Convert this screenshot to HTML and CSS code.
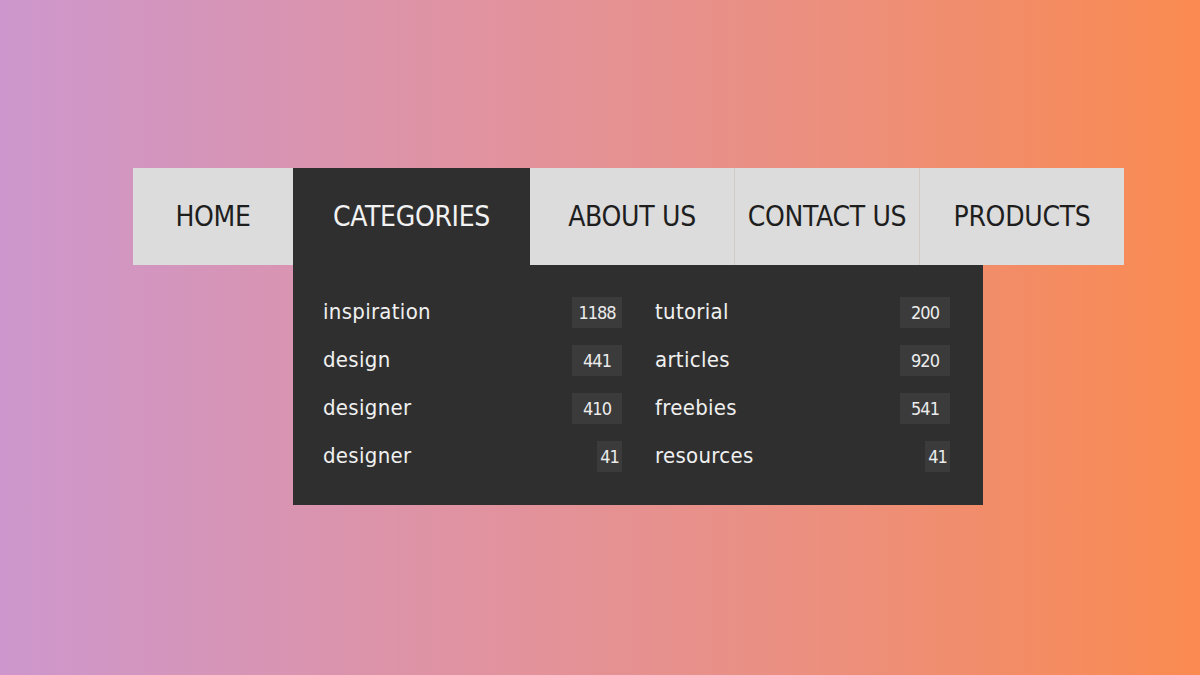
FILE: index.html
```html
<!DOCTYPE html>
<html lang="en">
<head>
<meta charset="utf-8">
<title>Menu</title>
<link rel="stylesheet" href="styles.css">
</head>
<body>
<div class="page">
  <nav class="nav">
    <div class="nav-item nav-home">HOME</div>
    <div class="nav-item nav-categories active">CATEGORIES
      <div class="dropdown">
        <div class="row"><span class="label">inspiration</span><span class="badge">1188</span></div>
        <div class="row"><span class="label">tutorial</span><span class="badge">200</span></div>
        <div class="row"><span class="label">design</span><span class="badge">441</span></div>
        <div class="row"><span class="label">articles</span><span class="badge">920</span></div>
        <div class="row"><span class="label">designer</span><span class="badge">410</span></div>
        <div class="row"><span class="label">freebies</span><span class="badge">541</span></div>
        <div class="row"><span class="label">designer</span><span class="badge badge-narrow">41</span></div>
        <div class="row"><span class="label">resources</span><span class="badge badge-narrow">41</span></div>
      </div>
    </div>
    <div class="nav-item nav-about">ABOUT US</div>
    <div class="nav-item nav-contact">CONTACT US</div>
    <div class="nav-item nav-products">PRODUCTS</div>
  </nav>
</div>
</body>
</html>
```

FILE: styles.css
```css
html, body {
  margin: 0;
  padding: 0;
}
body {
  width: 1200px;
  height: 675px;
  overflow: hidden;
  background: linear-gradient(to right, #cd97cd 0%, #e3929a 45%, #ec8f7c 70%, #fa8a50 100%);
  font-family: "DejaVu Sans Condensed", "DejaVu Sans", sans-serif;
}
.page {
  padding-top: 168px;
  padding-left: 133px;
}
.nav {
  display: flex;
  width: 991px;
  height: 97px;
}
.nav-item {
  position: relative;
  display: flex;
  align-items: center;
  justify-content: center;
  background: #dcdcdc;
  color: #1e1e1e;
  font-size: 28px;
  letter-spacing: -0.3px;
  box-sizing: border-box;
}
.nav-home { width: 160px; }
.nav-categories { width: 237px; }
.nav-about { width: 204px; }
.nav-contact { width: 185px; border-left: 1px solid #d2cbc8; }
.nav-products { width: 205px; border-left: 1px solid #d2cbc8; }
.nav-item.active {
  background: #2f2f2f;
  color: #f2f2f2;
}
.dropdown {
  position: absolute;
  left: 0;
  top: 97px;
  width: 690px;
  height: 240px;
  box-sizing: border-box;
  padding: 32px 33px 0 30px;
  background: #2f2f2f;
  display: grid;
  grid-template-columns: 299px 295px;
  column-gap: 33px;
  grid-auto-rows: 31px;
  row-gap: 17px;
  align-content: start;
}
.row {
  display: flex;
  align-items: center;
  justify-content: space-between;
}
.label {
  color: #f0f0f0;
  font-size: 22px;
  letter-spacing: 0.3px;
  position: relative;
  top: -1px;
}
.badge {
  height: 31px;
  min-width: 50px;
  box-sizing: border-box;
  display: flex;
  align-items: center;
  justify-content: center;
  background: #3b3b3b;
  color: #ececec;
  font-size: 18px;
  letter-spacing: -1px;
}
.badge-narrow {
  min-width: 25px;
  padding: 0 3px;
}
```
